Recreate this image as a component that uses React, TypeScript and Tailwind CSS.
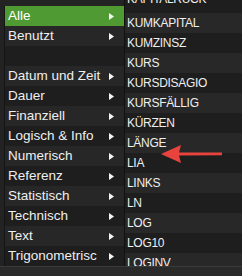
const categories = [
  "Alle",
  "Benutzt",
  "",
  "Datum und Zeit",
  "Dauer",
  "Finanziell",
  "Logisch & Info",
  "Numerisch",
  "Referenz",
  "Statistisch",
  "Technisch",
  "Text",
  "Trigonometrisc",
];

const functions = [
  "KAPITALRÜCK",
  "KUMKAPITAL",
  "KUMZINSZ",
  "KURS",
  "KURSDISAGIO",
  "KURSFÄLLIG",
  "KÜRZEN",
  "LÄNGE",
  "LIA",
  "LINKS",
  "LN",
  "LOG",
  "LOG10",
  "LOGINV",
];

function Caret() {
  return (
    <svg width="5" height="7" viewBox="0 0 5 7" className="shrink-0">
      <path d="M0 0 L5 3.5 L0 7 Z" fill="#f4f4f4" />
    </svg>
  );
}

export default function App() {
  return (
    <div
      className="relative flex h-[276px] w-[242px] flex-col overflow-hidden bg-[#232323] text-[#efefef]"
      style={{ fontFamily: '"Liberation Sans", Arial, sans-serif' }}
    >
      <div className="flex h-[266px]">
        {/* category menu */}
        <div className="w-[124px] shrink-0 pl-1 pt-[6px]">
          <div className="h-[260px] border-l border-[#151515] bg-[#1e1e1e]">
            {categories.map((label, i) => (
              <div
                key={i}
                className={`flex h-[20px] items-center justify-between pl-[3px] pr-[10px] text-[13.5px] ${
                  i === 0
                    ? "bg-[#4f9a33] text-white"
                    : i % 2 === 1
                      ? "bg-[#272727]"
                      : "bg-[#1e1e1e]"
                }`}
              >
                <span className="whitespace-nowrap">{label}</span>
                {label && <Caret />}
              </div>
            ))}
          </div>
        </div>

        {/* function list */}
        <div className="flex-1 overflow-hidden border-l border-[#111111]">
          <div className="-mt-[7px]">
            {functions.map((name, i) => (
              <div
                key={name}
                className={`flex h-[20px] items-center pl-[2px] text-[12px] tracking-[-0.3px] ${
                  i % 2 === 1 ? "bg-[#282828]" : "bg-[#1e1e1e]"
                }`}
              >
                <span className={i === 0 ? "-translate-y-[4px]" : ""}>{name}</span>
              </div>
            ))}
          </div>
        </div>
      </div>

      <div className="h-[10px] border-t border-[#3a3a3a] bg-[#2a2a2a]" />

      {/* red annotation arrow */}
      <svg
        className="absolute left-[160px] top-[144px]"
        width="64"
        height="20"
        viewBox="0 0 64 20"
      >
        <path d="M1 10 L21 1 L19 8.5 L62 8.6 L62 11.2 L19 11.5 L21 19 Z" fill="#e8443d" />
      </svg>
    </div>
  );
}
